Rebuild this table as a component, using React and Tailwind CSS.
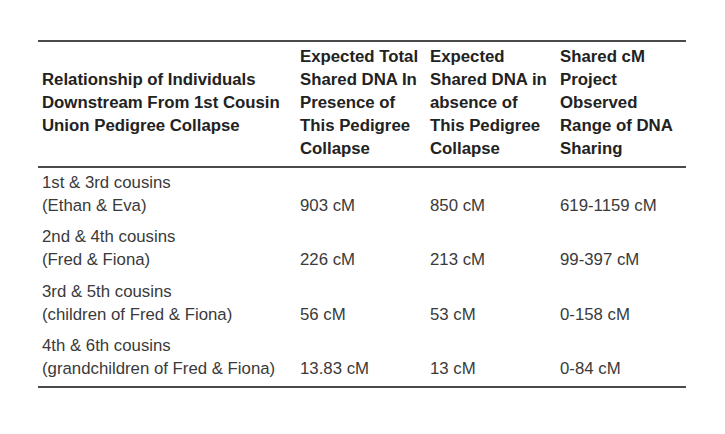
import React from "react";

const headers = [
  ["Relationship of Individuals", "Downstream From 1st Cousin", "Union Pedigree Collapse"],
  ["Expected Total", "Shared DNA In", "Presence of", "This Pedigree", "Collapse"],
  ["Expected", "Shared DNA in", "absence of", "This Pedigree", "Collapse"],
  ["Shared cM", "Project", "Observed", "Range of DNA", "Sharing"],
];

const rows = [
  ["1st & 3rd cousins", "(Ethan & Eva)", "903 cM", "850 cM", "619-1159 cM"],
  ["2nd & 4th cousins", "(Fred & Fiona)", "226 cM", "213 cM", "99-397 cM"],
  ["3rd & 5th cousins", "(children of Fred & Fiona)", "56 cM", "53 cM", "0-158 cM"],
  ["4th & 6th cousins", "(grandchildren of Fred & Fiona)", "13.83 cM", "13 cM", "0-84 cM"],
];

const App = () => {
  return (
    <div className="w-[725px] h-[434px] overflow-hidden bg-white pt-[40px] pl-[38px] font-['Liberation_Sans',Arial,sans-serif]">
      <table className="w-[648px] border-collapse table-fixed text-[16.8px] leading-[23px]">
        <thead>
          <tr className="border-t-2 border-b-2 border-[#4a4a4a] text-[#222] text-left">
            {headers.map((lines, i) => (
              <th
                key={i}
                className={`${i === 0 ? "w-[258px]" : "w-[130px]"} pl-[4px] pt-[3px] pb-[6px] align-middle font-bold whitespace-nowrap`}
              >
                {lines.map((l, j) => (
                  <div key={j}>{l}</div>
                ))}
              </th>
            ))}
          </tr>
        </thead>
        <tbody className="text-[#3a3a3a] border-b-2 border-[#4a4a4a]">
          {rows.map((r, i) => (
            <tr key={i}>
              <td className="pl-[4px] pt-[3px] pb-[5.4px] align-bottom whitespace-nowrap">
                <div>{r[0]}</div>
                <div>{r[1]}</div>
              </td>
              <td className="pl-[4px] pt-[3px] pb-[5.4px] align-bottom whitespace-nowrap">{r[2]}</td>
              <td className="pl-[4px] pt-[3px] pb-[5.4px] align-bottom whitespace-nowrap">{r[3]}</td>
              <td className="pl-[4px] pt-[3px] pb-[5.4px] align-bottom whitespace-nowrap">{r[4]}</td>
            </tr>
          ))}
        </tbody>
      </table>
    </div>
  );
};

export default App;
